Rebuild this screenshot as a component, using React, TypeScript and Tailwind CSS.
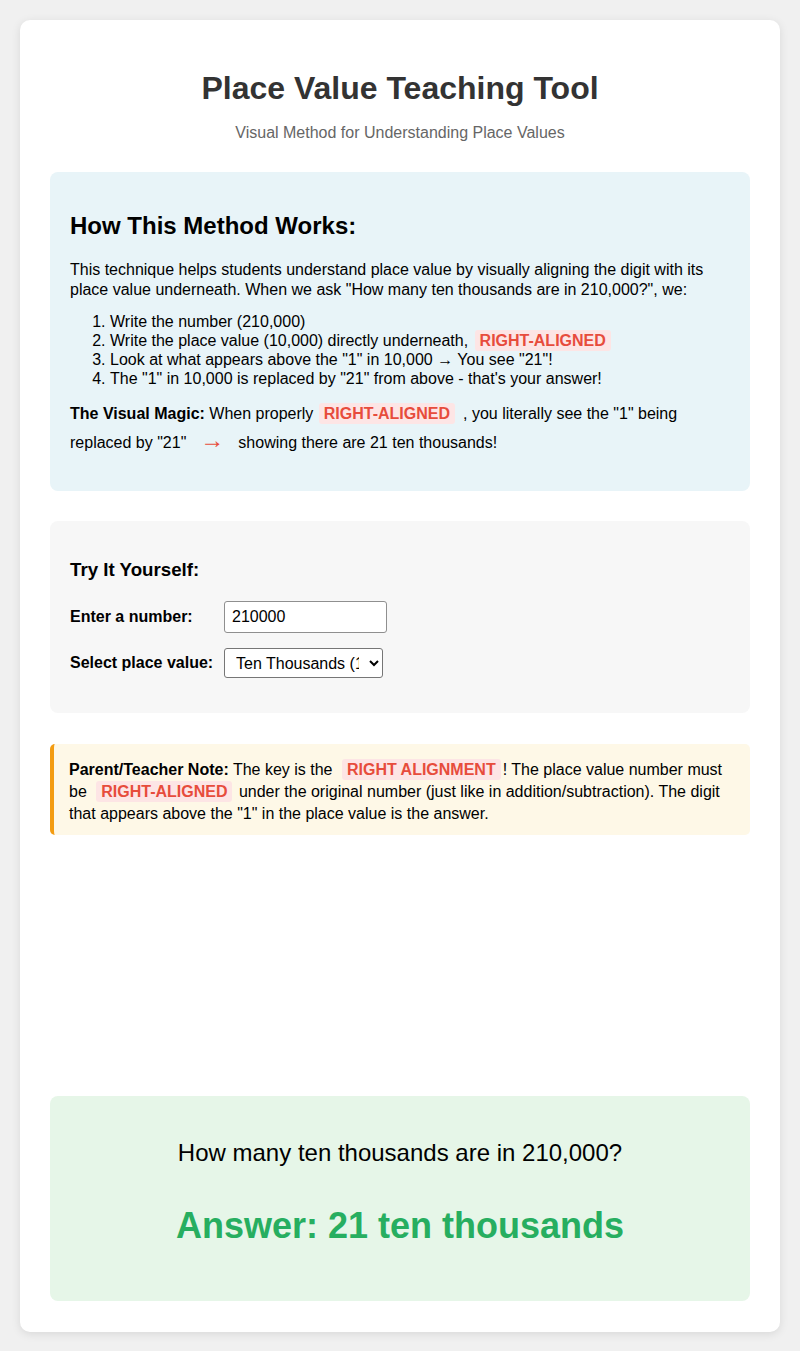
export default function App() {
  return (
    <div className="min-h-screen bg-[#f0f0f0] p-5 font-['Liberation_Sans',Arial,sans-serif] text-black">
      <div className="rounded-[10px] bg-white px-[30px] pb-[31px] pt-[50px] shadow-[0_2px_10px_rgba(0,0,0,0.1)]">
        <h1 className="text-center text-[32px] font-bold leading-[37px] text-[#333]">
          Place Value Teaching Tool
        </h1>
        <p className="mt-[17px] text-center text-base leading-[18px] text-[#666]">
          Visual Method for Understanding Place Values
        </p>

        <div className="mt-[30px] rounded-lg bg-[#e8f4f8] px-5 pb-[18px] pt-10">
          <h2 className="text-2xl font-bold leading-7">How This Method Works:</h2>
          <p className="mt-5 text-base leading-5">
            This technique helps students understand place value by visually aligning the digit with its
            place value underneath. When we ask "How many ten thousands are in 210,000?", we:
          </p>
          <ol className="mt-3 list-decimal pl-10 text-base leading-[19px]">
            <li>Write the number (210,000)</li>
            <li>
              Write the place value (10,000) directly underneath, <Hl className="ml-[2px]">RIGHT-ALIGNED</Hl>
            </li>
            <li>Look at what appears above the "1" in 10,000 → You see "21"!</li>
            <li>The "1" in 10,000 is replaced by "21" from above - that's your answer!</li>
          </ol>
          <p className="mb-4 mt-[11px] text-base leading-[29px]">
            <strong>The Visual Magic:</strong> When properly <Hl className="ml-[1px] mr-[8px]">RIGHT-ALIGNED</Hl>,
            you literally see the "1" being replaced by "21"
            <span className="mx-[14px] text-2xl leading-none text-[#e74c3c]">→</span>
            showing there are 21 ten thousands!
          </p>
        </div>

        <div className="mt-[30px] rounded-lg bg-[#f7f7f7] px-5 pb-5 pt-[38px]">
          <h3 className="text-[18.72px] font-bold leading-[22px]">Try It Yourself:</h3>
          <div className="mt-5 flex items-center">
            <label className="w-[154px] font-bold">Enter a number:</label>
            <input
              type="text"
              defaultValue="210000"
              className="h-8 w-[163px] rounded-[3px] border border-[#8f8f8f] bg-white px-[7px] text-base"
            />
          </div>
          <div className="mt-[15px] flex items-center">
            <label className="w-[154px] font-bold">Select place value:</label>
            <select
              defaultValue="10000"
              className="h-[30px] w-[159px] rounded-[3px] border border-[#767676] bg-white px-[7px] text-base"
            >
              <option value="10">Tens (10)</option>
              <option value="100">Hundreds (100)</option>
              <option value="1000">Thousands (1,000)</option>
              <option value="10000">Ten Thousands (10,000)</option>
              <option value="100000">Hundred Thousands (100,000)</option>
            </select>
          </div>
          <div className="h-[15px]" />
        </div>

        <div className="mt-[31px] rounded-[5px] border-l-4 border-[#f39c12] bg-[#fef8e7] pb-[10px] pl-[15px] pr-[15px] pt-[15px] text-base leading-[22px]">
          <strong>Parent/Teacher Note:</strong> The key is the <Hl className="ml-[5px] mr-[2px]">RIGHT ALIGNMENT</Hl>!
          The place value number must be <Hl className="ml-[5px] mr-[2px]">RIGHT-ALIGNED</Hl> under the original
          number (just like in addition/subtraction). The digit that appears above the "1" in the place value is
          the answer.
        </div>

        <div className="h-[231px]" />

        <div className="mt-[30px] rounded-lg bg-[#e6f6e8] px-5 pb-[54px] pt-[43px] text-center">
          <p className="text-2xl leading-7">How many ten thousands are in 210,000?</p>
          <p className="mt-[38px] text-[36px] font-bold leading-[42px] text-[#27ae60]">
            Answer: 21 ten thousands
          </p>
        </div>
      </div>
    </div>
  );
}

function Hl({ children, className }: { children: React.ReactNode; className?: string }) {
  return (
    <span
      className={`rounded-[3px] bg-[#fde5e5] px-[5px] py-[2px] text-base leading-none font-bold text-[#e74c3c] ${className ?? ""}`}
    >
      {children}
    </span>
  );
}
